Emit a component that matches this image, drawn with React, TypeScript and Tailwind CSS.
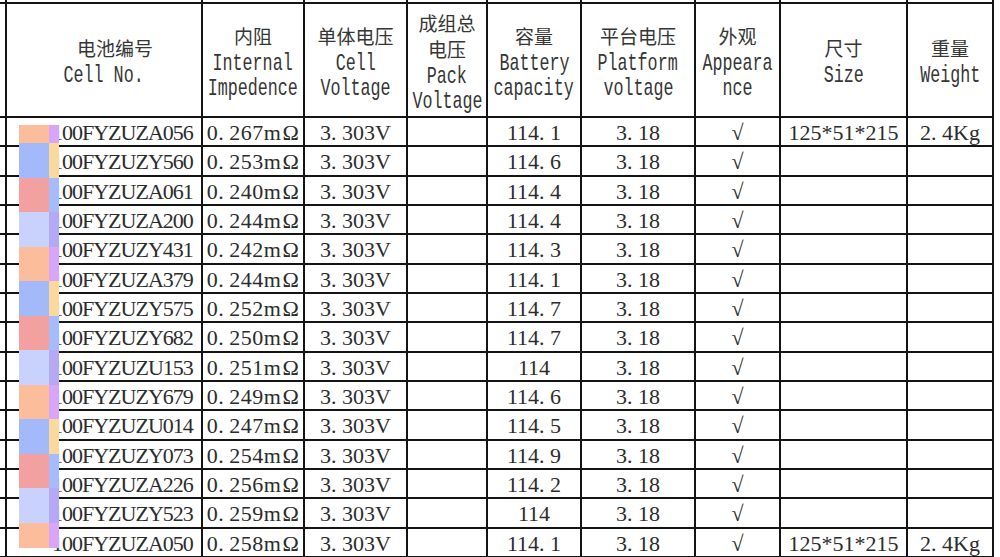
import React from 'react';

const colW = [
  'w-[7px]',
  'w-[196px]',
  'w-[102px]',
  'w-[103px]',
  'w-[80px]',
  'w-[94px]',
  'w-[114px]',
  'w-[85px]',
  'w-[127px]',
  'w-[86px]',
];

const headers: { zh: string[]; en: string[]; zhShift?: string }[] = [
  { zh: ['电池编号'], en: ['Cell No.'], zhShift: 'ml-[22px]' },
  { zh: ['内阻'], en: ['Internal', 'Impedence'] },
  { zh: ['单体电压'], en: ['Cell', 'Voltage'] },
  { zh: ['成组总', '电压'], en: ['Pack', 'Voltage'] },
  { zh: ['容量'], en: ['Battery', 'capacity'] },
  { zh: ['平台电压'], en: ['Platform', 'voltage'] },
  { zh: ['外观'], en: ['Appeara', 'nce'] },
  { zh: ['尺寸'], en: ['Size'] },
  { zh: ['重量'], en: ['Weight'] },
];

const rows: [string, string, string][] = [
  ['100FYZUZA056', '0.267', '114.1'],
  ['100FYZUZY560', '0.253', '114.6'],
  ['100FYZUZA061', '0.240', '114.4'],
  ['100FYZUZA200', '0.244', '114.4'],
  ['100FYZUZY431', '0.242', '114.3'],
  ['100FYZUZA379', '0.244', '114.1'],
  ['100FYZUZY575', '0.252', '114.7'],
  ['100FYZUZY682', '0.250', '114.7'],
  ['100FYZUZU153', '0.251', '114'],
  ['100FYZUZY679', '0.249', '114.6'],
  ['100FYZUZU014', '0.247', '114.5'],
  ['100FYZUZY073', '0.254', '114.9'],
  ['100FYZUZA226', '0.256', '114.2'],
  ['100FYZUZY523', '0.259', '114'],
  ['100FYZUZA050', '0.258', '114.1'],
];

const bigColors = ['bg-[#fbbd9c]', 'bg-[#a3b9fa]', 'bg-[#f2a0a0]', 'bg-[#c8d2fc]'];
const thinColors = ['bg-[#d8a6f8]', 'bg-[#fad89e]', 'bg-[#a6bbfb]', 'bg-[#b5a9f6]'];

const cellBase = 'shrink-0 border-r-2 border-b-2 border-[#141414]';

// 宋体风格：小数点占半个字宽
function Num({ value }: { value: string }) {
  const i = value.indexOf('.');
  if (i < 0) return <>{value}</>;
  return (
    <>
      {value.slice(0, i)}
      <span className="inline-block w-[11px]">.</span>
      {value.slice(i + 1)}
    </>
  );
}

function HeaderCell({ zh, en, zhShift }: { zh: string[]; en: string[]; zhShift?: string }) {
  return (
    <div className="flex flex-col items-center justify-center h-full pt-[4px] text-[#363636]">
      {zh.map((t) => (
        <div
          key={t}
          className={`font-['Noto_Sans_CJK_SC',sans-serif] text-[19px] leading-[26px] ${zhShift ?? ''}`}
        >
          {t}
        </div>
      ))}
      <div className="flex flex-col items-center mt-[2px]">
        {en.map((t) => (
          <div key={t} className="h-[25.5px] leading-[25.5px] whitespace-nowrap">
            <span className="inline-block font-['Liberation_Mono',monospace] text-[24px] scale-x-[0.695] whitespace-pre">
              {t}
            </span>
          </div>
        ))}
      </div>
    </div>
  );
}

export default function App() {
  const last = rows.length - 1;
  return (
    <div className="relative w-[1000px] h-[557px] overflow-hidden bg-white font-['Liberation_Serif',serif] text-[#2c2c2c]">
      {/* row cut off above */}
      <div className="flex h-[4px]">
        {colW.map((w, i) => (
          <div key={i} className={`${cellBase} ${w}`} />
        ))}
      </div>

      {/* header */}
      <div className="flex h-[114px]">
        <div className={`${cellBase} ${colW[0]}`} />
        {headers.map((h, i) => (
          <div key={i} className={`${cellBase} ${colW[i + 1]}`}>
            <HeaderCell {...h} />
          </div>
        ))}
      </div>

      {/* data rows */}
      {rows.map(([id, ir, cap], r) => {
        const showSize = r === 0 || r === last;
        const vals = [
          `${ir}mΩ`,
          '3.303V',
          '',
          cap,
          '3.18',
          '√',
          showSize ? '125*51*215' : '',
          showSize ? '2.4Kg' : '',
        ];
        return (
          <div key={id} className="flex h-[29.33px] text-[22px] leading-none">
            <div className={`${cellBase} ${colW[0]}`} />
            <div className={`${cellBase} ${colW[1]} flex items-center pl-[45px] pt-[3px]`}>
              <span className="tracking-[-1px] whitespace-nowrap">{id}</span>
            </div>
            {vals.map((v, i) => (
              <div
                key={i}
                className={`${cellBase} ${colW[i + 2]} flex items-center justify-center pt-[3px] whitespace-nowrap`}
              >
                {i === 0 ? (
                  <span className="tracking-[0.5px]">
                    <Num value={ir} />m<span className="ml-[1px]">Ω</span>
                  </span>
                ) : (
                  <Num value={v} />
                )}
              </div>
            ))}
          </div>
        );
      })}

      {/* colour tags laid over the cell number column */}
      <div className="absolute left-[19px] top-[125px] w-[40px] h-[423px] overflow-hidden">
        <div className="flex flex-col -mt-[16.5px]">
          {Array.from({ length: 13 }).map((_, i) => (
            <div key={i} className="flex h-[34.5px] shrink-0">
              <div className={`w-[30px] ${bigColors[i % 4]}`} />
              <div className={`w-[10px] ${thinColors[i % 4]}`} />
            </div>
          ))}
        </div>
      </div>
    </div>
  );
}
